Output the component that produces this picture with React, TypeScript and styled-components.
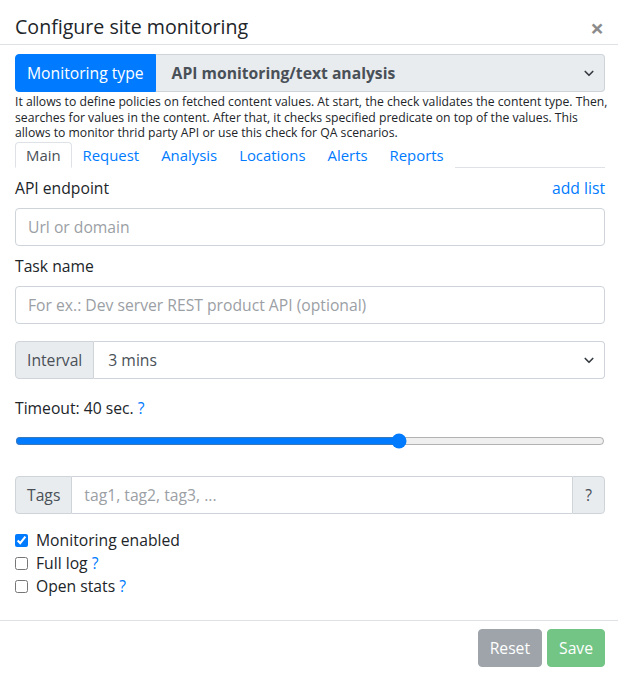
import styled, { createGlobalStyle } from 'styled-components';
import { useState } from 'react';

const GlobalStyle = createGlobalStyle`
  html, body {
    margin: 0;
    padding: 0;
    background: #fff;
  }
  body {
    font-family: 'Open Sans', 'Noto Sans', sans-serif;
    color: #212529;
    font-size: 15.7px;
  }
  * {
    box-sizing: border-box;
  }
`;

const TABS = ['Main', 'Request', 'Analysis', 'Locations', 'Alerts', 'Reports'];

const Chevron = () => (
  <svg width='12' height='12' viewBox='0 0 16 16' fill='none'>
    <path
      d='M3 6l5 5 5-5'
      stroke='#343a40'
      strokeWidth='2.2'
      strokeLinecap='round'
      strokeLinejoin='round'
    />
  </svg>
);

export default function App() {
  const [activeTab, setActiveTab] = useState('Main');
  const [timeout, setTimeoutValue] = useState(40);
  const [enabled, setEnabled] = useState(true);
  const [fullLog, setFullLog] = useState(false);
  const [openStats, setOpenStats] = useState(false);

  return (
    <Modal>
      <GlobalStyle />
      <Header>
        <Title>Configure site monitoring</Title>
        <CloseButton aria-label='Close'>×</CloseButton>
      </Header>

      <Body>
        <InputGroup>
          <GroupLabel $primary>Monitoring type</GroupLabel>
          <SelectBox $disabled>
            <span>API monitoring/text analysis</span>
            <Chevron />
          </SelectBox>
        </InputGroup>
        <Description>
          It allows to define policies on fetched content values. At start, the
          check validates the content type. Then, searches for values in the
          content. After that, it checks specified predicate on top of the
          values. This allows to monitor thrid party API or use this check for
          QA scenarios.
        </Description>

        <Tabs>
          {TABS.map((tab) => (
            <Tab
              key={tab}
              $active={activeTab === tab}
              onClick={() => setActiveTab(tab)}
            >
              {tab}
            </Tab>
          ))}
        </Tabs>

        <LabelRow>
          <label htmlFor='endpoint'>API endpoint</label>
          <Link href='#'>add list</Link>
        </LabelRow>
        <TextInput id='endpoint' placeholder='Url or domain' />

        <LabelRow>
          <label htmlFor='taskName'>Task name</label>
        </LabelRow>
        <TextInput
          id='taskName'
          placeholder='For ex.: Dev server REST product API (optional)'
        />

        <InputGroup $spaced='17px'>
          <GroupLabel>Interval</GroupLabel>
          <SelectBox>
            <span>3 mins</span>
            <Chevron />
          </SelectBox>
        </InputGroup>

        <TimeoutLabel>
          Timeout: {timeout} sec. <Link href='#'>?</Link>
        </TimeoutLabel>
        <Range
          type='range'
          min={2}
          max={60}
          value={timeout}
          onChange={(e) => setTimeoutValue(Number(e.target.value))}
        />

        <InputGroup $spaced='27px'>
          <GroupLabel>Tags</GroupLabel>
          <GroupInput placeholder='tag1, tag2, tag3, ...' />
          <GroupLabel $append>?</GroupLabel>
        </InputGroup>

        <Checks>
          <CheckRow>
            <input
              type='checkbox'
              checked={enabled}
              onChange={() => setEnabled(!enabled)}
            />
            Monitoring enabled
          </CheckRow>
          <CheckRow>
            <input
              type='checkbox'
              checked={fullLog}
              onChange={() => setFullLog(!fullLog)}
            />
            <span>
              Full log <Link href='#'>?</Link>
            </span>
          </CheckRow>
          <CheckRow>
            <input
              type='checkbox'
              checked={openStats}
              onChange={() => setOpenStats(!openStats)}
            />
            <span>
              Open stats <Link href='#'>?</Link>
            </span>
          </CheckRow>
        </Checks>
      </Body>

      <Footer>
        <Button $color='#6c757d'>Reset</Button>
        <Button $color='#28a745'>Save</Button>
      </Footer>
    </Modal>
  );
}

const Modal = styled.div`
  width: 618px;
  background: #fff;
`;

const Header = styled.div`
  display: flex;
  align-items: center;
  justify-content: space-between;
  padding: 12px 14px 2px 15px;
  border-bottom: 1px solid #dee2e6;
`;

const Title = styled.h5`
  margin: 0;
  font-size: 19.6px;
  font-weight: 500;
  line-height: 30px;
  color: #212529;
`;

const CloseButton = styled.button`
  border: none;
  background: none;
  padding: 0;
  font-size: 24px;
  font-weight: 700;
  line-height: 1;
  color: #000;
  opacity: 0.45;
  margin-top: 2px;
  cursor: pointer;
  font-family: inherit;
`;

const Body = styled.div`
  padding: 9px 13px 22px 15px;
`;

const InputGroup = styled.div<{ $spaced?: string }>`
  display: flex;
  height: 38px;
  margin-top: ${({ $spaced }) => $spaced ?? '0'};
`;

const GroupLabel = styled.span<{ $primary?: boolean; $append?: boolean }>`
  display: flex;
  align-items: center;
  padding: 0 11px;
  color: ${({ $primary }) => ($primary ? '#fff' : '#495057')};
  background: ${({ $primary }) => ($primary ? '#007bff' : '#e9ecef')};
  border: 1px solid ${({ $primary }) => ($primary ? '#007bff' : '#ced4da')};
  border-radius: ${({ $append }) => ($append ? '0 4px 4px 0' : '4px 0 0 4px')};
  white-space: nowrap;
  ${({ $append }) => ($append ? 'padding: 0 12px;' : '')}
`;

const SelectBox = styled.div<{ $disabled?: boolean }>`
  flex: 1;
  display: flex;
  align-items: center;
  justify-content: space-between;
  padding: 0 9px 0 ${({ $disabled }) => ($disabled ? '16px' : '14px')};
  font-weight: ${({ $disabled }) => ($disabled ? 700 : 400)};
  color: #495057;
  background: ${({ $disabled }) => ($disabled ? '#e9ecef' : '#fff')};
  border: 1px solid #ced4da;
  border-left: none;
  border-radius: 0 4px 4px 0;
`;

const Description = styled.small`
  display: block;
  font-size: 12.2px;
  line-height: 15.5px;
  margin: 2px -10px 0 0;
  color: #212529;
`;

const Tabs = styled.div`
  display: flex;
  margin-top: 1px;
  border-bottom: 1px solid #dee2e6;
`;

const Tab = styled.a<{ $active?: boolean }>`
  display: block;
  padding: 0 10px;
  line-height: 24px;
  font-size: 14.9px;
  margin-bottom: -1px;
  cursor: pointer;
  color: ${({ $active }) => ($active ? '#495057' : '#007bff')};
  border: 1px solid ${({ $active }) => ($active ? '#dee2e6' : 'transparent')};
  border-bottom-color: ${({ $active }) => ($active ? '#fff' : 'transparent')};
  border-radius: 4px 4px 0 0;
  background: #fff;
`;

const LabelRow = styled.div`
  display: flex;
  justify-content: space-between;
  align-items: center;
  margin: 8px 0;
  line-height: 24px;
  color: #212529;
`;

const Link = styled.a`
  color: #007bff;
  text-decoration: none;
`;

const TextInput = styled.input`
  display: block;
  width: 100%;
  height: 38px;
  padding: 0 12px;
  font-size: 15.7px;
  font-family: inherit;
  color: #495057;
  border: 1px solid #ced4da;
  border-radius: 4px;
  outline: none;
  &::placeholder {
    color: #9ba0a5;
  }
`;

const GroupInput = styled(TextInput)`
  flex: 1;
  height: 100%;
  border-radius: 0;
  border-left: none;
  border-right: none;
`;

const TimeoutLabel = styled.div`
  margin-top: 17px;
  line-height: 24px;
`;

const Range = styled.input`
  display: block;
  width: 100%;
  height: 16px;
  margin: 13px 0 0;
  accent-color: #007bff;
`;

const Checks = styled.div`
  margin-top: 15px;
  display: flex;
  flex-direction: column;
`;

const CheckRow = styled.label`
  display: flex;
  align-items: center;
  gap: 8px;
  line-height: 23px;
  color: #212529;
  input {
    margin: 0;
    width: 13px;
    height: 13px;
    accent-color: #007bff;
  }
`;

const Footer = styled.div`
  display: flex;
  justify-content: flex-end;
  gap: 5px;
  padding: 8px 13px 8px 15px;
  border-top: 1px solid #dee2e6;
`;

const Button = styled.button<{ $color: string }>`
  height: 38px;
  padding: 0 11px;
  font-size: 15.7px;
  font-family: inherit;
  color: #fff;
  background: ${({ $color }) => $color};
  border: 1px solid ${({ $color }) => $color};
  border-radius: 4px;
  opacity: 0.65;
`;
